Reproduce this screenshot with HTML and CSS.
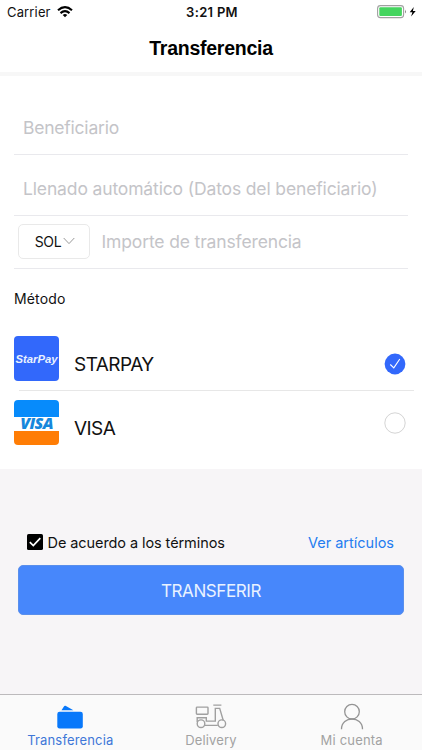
FILE: index.html
```html
<!DOCTYPE html>
<html lang="es">
<head>
<meta charset="utf-8">
<meta name="viewport" content="width=device-width, initial-scale=1">
<title>Transferencia</title>
<link rel="stylesheet" href="styles.css">
</head>
<body>
<div class="app">
  <div class="status">
    <div class="carrier"><span>Carrier</span>
      <svg width="16" height="12" viewBox="0 0 16 12" fill="none" stroke="#000" stroke-width="2.1"><path d="M1 4.3Q8-1.9 15 4.3M3.5 7.1Q8 3.2 12.5 7.1"/><path d="M8 11.2 5.7 9Q8 7.1 10.3 9Z" fill="#000" stroke="none"/></svg>
    </div>
    <span class="time">3:21 PM</span>
    <svg class="battery" width="40" height="14" viewBox="0 0 40 14"><rect x=".6" y=".6" width="26" height="12" rx="2.8" fill="#fff" stroke="#a0a0a0" stroke-width="1.1"/><rect x="2.3" y="2.3" width="22.6" height="8.6" rx="1" fill="#45d55f"/><path d="M28 4.6q1.6 2 0 4z" fill="#777"/><path d="M36.8 2 32.7 7.2h2.7l-1.3 4.2 4.6-5.5h-2.8z" fill="#000"/></svg>
  </div>
  <header class="header"><h1>Transferencia</h1></header>
  <main>
    <section class="form">
      <div class="field name"><span>Beneficiario</span></div>
      <div class="field auto"><span>Llenado automático (Datos del beneficiario)</span></div>
      <div class="field amount">
        <button class="currency"><span>SOL</span><svg width="12" height="8" viewBox="0 0 12 8" fill="none" stroke="#999"><path d="M.7 1 6 6.6 11.3 1"/></svg></button>
        <span class="import">Importe de transferencia</span>
      </div>
    </section>
    <section class="methods">
      <h2>Método</h2>
      <div class="method">
        <div class="logo starpay">StarPay</div><span class="star-name">STARPAY</span>
        <svg class="radio" width="22" height="22" viewBox="0 0 22 22" fill="none"><circle cx="11" cy="11" r="10.4" fill="#3268fb"/><path d="m6.3 11.5 3.5 3.4 6-8.9" stroke="#fff" stroke-width="1.1"/></svg>
      </div>
      <div class="method second">
        <div class="logo visa"><span>VISA</span></div><span class="visa-name">VISA</span>
        <svg class="radio" width="22" height="22" viewBox="0 0 22 22" fill="none"><circle cx="11" cy="11" r="10.2" stroke="#d4d4d4"/></svg>
      </div>
    </section>
    <section class="action">
      <div class="terms">
        <svg width="16" height="16" viewBox="0 0 16 16"><rect width="16" height="16" rx="1.6"/><path d="m2.8 8.2 3.5 3.4 7-7.5" fill="none" stroke="#fff" stroke-width="1.7"/></svg>
        <span class="accept">De acuerdo a los términos</span><a>Ver artículos</a>
      </div>
      <button class="submit"><span>TRANSFERIR</span></button>
    </section>
  </main>
  <nav class="tabs">
    <div class="tab active"><svg width="32" height="30" viewBox="0 0 32 30" fill="#0878fa"><path d="m7.5 7.2 2.6-4q.5-.8 1.4-.4l7.9 4.4z"/><rect x="3.3" y="8.7" width="25.5" height="16.8" rx="2.3"/></svg><span class="t1">Transferencia</span></div>
    <div class="tab"><svg width="32" height="30" viewBox="0 0 32 30" fill="none" stroke="#a0a0a0" stroke-width="1.4"><rect x="1.4" y="4.1" width="11.6" height="7.2" rx=".7"/><path d="M18.3 2.1h8.1M2.2 19v-4.2h9.1v3.3h9V5.4h4.4l3.5 11.8M10 22.4h12.8"/><circle cx="6" cy="20.7" r="3.8"/><circle cx="26.8" cy="20.7" r="3.8"/></svg><span class="t2">Delivery</span></div>
    <div class="tab"><svg width="32" height="30" viewBox="0 0 32 30" fill="none" stroke="#949494" stroke-width="1.3"><circle cx="16" cy="8.7" r="7.3"/><path d="M5.5 26.2c0-13.6 21-13.6 21 0"/></svg><span class="t3">Mi cuenta</span></div>
  </nav>
</div>
</body>
</html>
```
FILE: styles.css
```css
* { box-sizing: border-box; }
body { margin: 0; font-family: Inter, "Liberation Sans", sans-serif; color: #111; }
.app { width: 422px; height: 750px; display: flex; flex-direction: column; background: #f7f5f7; overflow: hidden; }
span, a, h1, h2 { white-space: nowrap; }
button { font-family: inherit; }
svg { display: block; flex-shrink: 0; }
.status { height: 24px; background: #fff; display: grid; grid-template-columns: 1fr auto 1fr; align-items: center; padding: 0 5px 0 7px; font-size: 13px; }
.carrier { display: flex; align-items: center; gap: 6px; }
.carrier span { letter-spacing: .15px; }
.time { font-weight: 600; letter-spacing: .3px; }
.battery { justify-self: end; }
.header { height: 52px; background: #fff; border-bottom: 4px solid #f7f7f7; display: flex; align-items: center; justify-content: center; padding-bottom: 1px; }
h1 { margin: 0; font: bold 19.5px/24px "Liberation Sans", sans-serif; letter-spacing: -.25px; color: #000; }
main { flex: 1; }
.form { background: #fff; padding: 0 14px; }
.field { border-bottom: 1px solid #e9e9ed; display: flex; align-items: center; color: #c4c4c8; font-size: 17.5px; letter-spacing: -.14px; }
.name { height: 79px; padding: 25px 9px 0; letter-spacing: -.22px; }
.auto { height: 61px; padding: 7px 9px 0; }
.amount { height: 53px; padding: 0 0 2px 4px; }
.currency { width: 72px; height: 35px; border: 1px solid #e9e9e9; border-radius: 5px; background: #fff; display: flex; align-items: center; justify-content: center; gap: 2px; padding: 0 0 0 2px; font-size: 14px; letter-spacing: -.3px; color: #111; }
.import { margin-left: 11.5px; }
.methods { background: #fff; height: 200px; padding: 19px 14px 0; }
h2 { margin: 0; font-size: 14px; line-height: 22px; font-weight: 400; letter-spacing: .15px; }
.method { display: grid; grid-template-columns: 45px 1fr 22px; column-gap: 15px; margin-top: 26px; height: 55px; padding-right: 2px; font-size: 19px; line-height: 24px; letter-spacing: -.55px; position: relative; }
.method > span { margin-top: 17px; }
.method .radio { margin-top: 17px; }
.method:not(.second)::after { content: ""; position: absolute; left: 5px; right: -6px; bottom: 0; border-top: 1px solid #e7e7e7; }
.second { margin-top: 9px; }
.second .radio { margin-top: 12px; }
.logo { width: 45px; height: 45px; border-radius: 4px; overflow: hidden; text-align: center; font-family: "Liberation Sans", sans-serif; font-style: italic; font-weight: bold; letter-spacing: 0; }
.starpay { background: #3268fb; color: #e9f1ff; font-size: 11.3px; line-height: 46px; }
.visa { background: linear-gradient(#078bfb 0 17px, #fff 17px 31px, #ff7d05 31px); color: #1687dc; font: italic 800 16px/47px "Open Sans", sans-serif; letter-spacing: -.6px; }
.action { padding: 62px 18px 0; }
.terms { display: flex; align-items: center; height: 22px; padding: 0 10px 0 9px; font-size: 14.5px; gap: 4.5px; letter-spacing: -.08px; }
.terms a { margin-left: auto; color: #247cf0; letter-spacing: 0; }
.submit { display: block; width: 386px; height: 50px; margin-top: 12px; border: 1px solid #5a8fec; border-radius: 5px; background: #4787fb; color: #e9f2ff; font-size: 17px; letter-spacing: -.4px; padding: 1px 0 0; }
.tabs { height: 56px; border-top: 1px solid #bcbabc; background: #fafafa; display: grid; grid-template-columns: repeat(3, 1fr); color: #a2a2a2; font-size: 13px; }
.tab { display: flex; flex-direction: column; align-items: center; padding-top: 8px; }
.tab span { line-height: 16px; margin-top: -1px; }
.active { color: #3e77d8; }
.t1, .t2 { letter-spacing: .15px; }
.t3 { letter-spacing: .2px; }
```
